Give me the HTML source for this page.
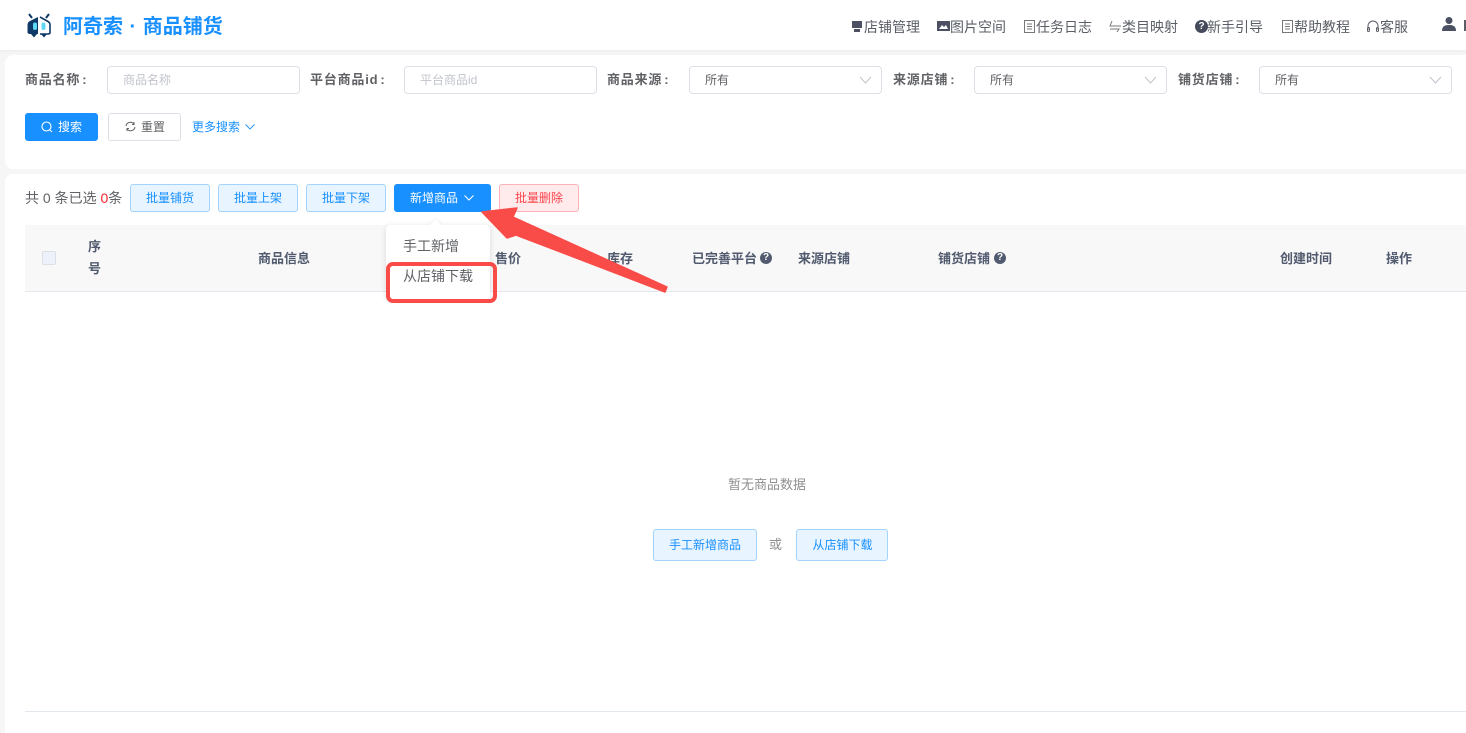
<!DOCTYPE html>
<html><head><meta charset="utf-8">
<style>
*{box-sizing:border-box;margin:0;padding:0}
html,body{width:1466px;height:733px;overflow:hidden;background:#f6f6f6}
body{position:relative;font-family:"Liberation Sans","Noto Sans CJK SC",sans-serif;font-size:12px;color:#606266}
.a{position:absolute;white-space:nowrap}
.card{position:absolute;background:#fff}
.nav{top:18px;font-size:14px;line-height:18px;color:#5a5e66}
.lab{top:71px;font-size:13px;line-height:18px;font-weight:bold;color:#606266;letter-spacing:.8px}
.lab i{font-style:normal;margin-left:2px}
.inp{position:absolute;top:66px;height:28px;border:1px solid #dcdfe6;border-radius:4px;background:#fff;font-size:12px;line-height:26px;padding-left:15px;color:#606266}
.inp.ph{color:#c0c4cc}
.btn{position:absolute;border-radius:3px;font-size:12px;text-align:center;border:1px solid #a3d3ff;background:#e8f4ff;color:#1890ff;height:28px;line-height:26px}
.th{top:250px;font-size:13px;line-height:18px;font-weight:bold;color:#515a6e}
.q{position:absolute;width:12px;height:12px;border-radius:50%;background:#515a6e;color:#fff;font-size:10px;line-height:12px;text-align:center;font-weight:bold}
</style></head><body>
<div class="card" style="left:0;top:0;width:1466px;height:50px;box-shadow:0 1px 4px rgba(0,21,41,.05)"></div>
<div class="card" style="left:5px;top:55px;width:1461px;height:114px;border-radius:8px 0 0 8px"></div>
<div class="card" style="left:5px;top:174px;width:1461px;height:559px;border-radius:8px 0 0 0"></div>

<svg class="a" style="left:26px;top:13px" width="26" height="26" viewBox="0 0 26 26">
<path d="M12 4L4 8Q1.500 9 1.500 12V19Q1.500 21 4 21H12Z" fill="#0f3a68"/>
<path d="M14 4L22 8.500Q24 9.500 24 12V19.500Q24 21 22 21H14" fill="#fff" stroke="#0f3a68" stroke-width="1.600"/>
<rect x="7" y="9.500" width="4" height="7.500" rx="2" fill="#5fd8f5"/>
<rect x="15.500" y="9.500" width="4" height="7.500" rx="2" fill="#5fd8f5"/>
<path d="M3 1L6 5M23 1L20 5" stroke="#0f3a68" stroke-width="2"/>
<path d="M5 21H11L8 24.500ZM15 21H21L18 24.500Z" fill="#0f3a68"/>
</svg>
<div class="a" style="left:63px;top:14px;font-size:20px;line-height:26px;font-weight:bold;color:#1890ff;word-spacing:1px">阿奇索 · 商品铺货</div>

<svg class="a" style="left:851px;top:20px" width="12" height="13" viewBox="0 0 12 13"><path d="M1 1H11V8H1ZM3 9H9V12H3Z" fill="#4b5162"/></svg>
<div class="a nav" style="left:864px">店铺管理</div>
<svg class="a" style="left:937px;top:20px" width="13" height="12" viewBox="0 0 13 12"><path d="M0 1H13V11H0Z" fill="#4b5162"/><path d="M2 9L5 5L7 7L9 5L11 9Z" fill="#fff"/></svg>
<div class="a nav" style="left:950px">图片空间</div>
<svg class="a" style="left:1024px;top:20px" width="11" height="13" viewBox="0 0 11 13" fill="none" stroke="#777"><path d="M.5.500H10.500V12.500H.5ZM3 4H8M3 6.500H8M3 9H8"/></svg>
<div class="a nav" style="left:1036px">任务日志</div>
<svg class="a" style="left:1109px;top:20px" width="13" height="13" viewBox="0 0 13 13" fill="none" stroke="#777"><path d="M3 1L1 6H12M1 9H10L8 12"/></svg>
<div class="a nav" style="left:1122px">类目映射</div>
<div class="q" style="left:1195px;top:20px;width:13px;height:13px;background:#454b5c;line-height:13px">?</div>
<div class="a nav" style="left:1207px">新手引导</div>
<svg class="a" style="left:1282px;top:20px" width="11" height="13" viewBox="0 0 11 13" fill="none" stroke="#777"><path d="M.5.500H10.500V12.500H.5ZM3 4H8M3 6.500H8M3 9H8"/></svg>
<div class="a nav" style="left:1294px">帮助教程</div>
<svg class="a" style="left:1366px;top:20px" width="14" height="13" viewBox="0 0 14 13" fill="none" stroke="#5a5e66" stroke-width="1"><path d="M2 10V6A5 5 0 0 1 12 6V10"/><rect x="1.500" y="7.500" width="2" height="4" rx="1"/><rect x="10.500" y="7.500" width="2" height="4" rx="1"/></svg>
<div class="a nav" style="left:1380px">客服</div>
<svg class="a" style="left:1441px;top:16px" width="16" height="16" viewBox="0 0 16 16"><circle cx="8" cy="4.500" r="3.500" fill="#4b5162"/><path d="M1 15C1 10 4 9 8 9S15 10 15 15Z" fill="#4b5162"/></svg>
<div class="a" style="left:1464px;top:20px;width:2px;height:11px;background:#5a5e66"></div>

<div class="a lab" style="left:25px">商品名称<i>:</i></div>
<div class="inp ph" style="left:107px;width:193px">商品名称</div>
<div class="a lab" style="left:310px">平台商品id<i>:</i></div>
<div class="inp ph" style="left:404px;width:193px">平台商品id</div>
<div class="a lab" style="left:607px">商品来源<i>:</i></div>
<div class="inp" style="left:689px;width:193px">所有<svg class="a" style="right:9px;top:9px" width="13" height="8" viewBox="0 0 13 8" fill="none" stroke="#c0c4cc"><path d="M1 1L6.500 7L12 1"/></svg></div>
<div class="a lab" style="left:893px">来源店铺<i>:</i></div>
<div class="inp" style="left:974px;width:193px">所有<svg class="a" style="right:9px;top:9px" width="13" height="8" viewBox="0 0 13 8" fill="none" stroke="#c0c4cc"><path d="M1 1L6.500 7L12 1"/></svg></div>
<div class="a lab" style="left:1178px">铺货店铺<i>:</i></div>
<div class="inp" style="left:1259px;width:193px">所有<svg class="a" style="right:9px;top:9px" width="13" height="8" viewBox="0 0 13 8" fill="none" stroke="#c0c4cc"><path d="M1 1L6.500 7L12 1"/></svg></div>

<div class="btn" style="left:25px;top:113px;width:73px;background:#1890ff;border-color:#1890ff;color:#fff;padding-left:17px">搜索</div>
<svg class="a" style="left:41px;top:121px" width="12" height="12" viewBox="0 0 12 12" fill="none" stroke="#fff" stroke-width="1.100"><circle cx="5.500" cy="5.500" r="4.500"/><path d="M9 9L11 11"/></svg>
<div class="btn" style="left:108px;top:113px;width:73px;background:#fff;border-color:#dcdfe6;color:#606266;padding-left:17px">重置</div>
<svg class="a" style="left:125px;top:121px" width="11" height="11" viewBox="0 0 11 11" fill="none" stroke="#606266"><path d="M1 5A4.500 4.500 0 0 1 9 3M10 6A4.500 4.500 0 0 1 2 8"/><path d="M9 1V3.500H7M2 10V7.500H4"/></svg>
<div class="a" style="left:192px;top:119px;font-size:12px;line-height:17px;color:#1890ff">更多搜索</div>
<svg class="a" style="left:245px;top:124px" width="10" height="6" viewBox="0 0 10 6" fill="none" stroke="#1890ff" stroke-width=".9"><path d="M.5.500L5 5L9.500.5"/></svg>

<div class="a" style="left:25px;top:189px;font-size:14px;line-height:18px;color:#606266">共 0 条已选 <span style="color:#f5222d">0</span>条</div>
<div class="btn" style="left:130px;top:184px;width:80px">批量铺货</div>
<div class="btn" style="left:218px;top:184px;width:80px">批量上架</div>
<div class="btn" style="left:306px;top:184px;width:80px">批量下架</div>
<div class="btn" style="left:394px;top:184px;width:97px;background:#1890ff;border-color:#1890ff;color:#fff;text-align:left;padding-left:15px">新增商品</div>
<svg class="a" style="left:464px;top:195px" width="10" height="6" viewBox="0 0 10 6" fill="none" stroke="#fff" stroke-width="1.100"><path d="M.5.500L5 5L9.500.5"/></svg>
<div class="btn" style="left:499px;top:184px;width:80px;background:#ffeaec;border-color:#ffb3b8;color:#f9464d">批量删除</div>

<div class="a" style="left:25px;top:225px;width:1441px;height:67px;background:#f8f8f9;border-bottom:1px solid #e3e8ee"></div>
<div class="a" style="left:42px;top:251px;width:14px;height:14px;background:#ecf1fa;border:1px solid #dcdfe6;border-radius:2px"></div>
<div class="a th" style="left:88px;top:238px">序</div>
<div class="a th" style="left:88px;top:260px">号</div>
<div class="a th" style="left:258px">商品信息</div>
<div class="a th" style="left:495px">售价</div>
<div class="a th" style="left:607px">库存</div>
<div class="a th" style="left:692px">已完善平台</div>
<div class="q" style="left:760px;top:252px">?</div>
<div class="a th" style="left:798px">来源店铺</div>
<div class="a th" style="left:938px">铺货店铺</div>
<div class="q" style="left:994px;top:252px">?</div>
<div class="a th" style="left:1280px">创建时间</div>
<div class="a th" style="left:1386px">操作</div>

<div class="a" style="left:386px;top:225px;width:104px;height:74px;background:#fff;border-radius:4px;box-shadow:0 1px 6px rgba(0,0,0,.13)"></div>
<div class="a" style="left:431px;top:221px;width:9px;height:9px;background:#fff;transform:rotate(45deg);box-shadow:-1px -1px 2px rgba(0,0,0,.05)"></div>
<div class="a" style="left:403px;top:237px;font-size:14px;line-height:18px;color:#606266">手工新增</div>
<div class="a" style="left:403px;top:267px;font-size:14px;line-height:18px;color:#606266">从店铺下载</div>
<div class="a" style="left:386px;top:262px;width:111px;height:41px;border:4px solid #f94c48;border-radius:7px"></div>

<svg class="a" style="left:480px;top:205px" width="190" height="92" viewBox="0 0 190 92">
<path d="M2 7L37 3L33 12L187 82L185 87L36 30L27 33Z" fill="#f94c48" stroke="#f94c48" stroke-width="1.500" stroke-linejoin="round"/>
</svg>

<div class="a" style="left:728px;top:476px;font-size:13px;line-height:18px;color:#8f8f8f">暂无商品数据</div>
<div class="btn" style="left:653px;top:529px;width:104px;height:32px;line-height:30px">手工新增商品</div>
<div class="a" style="left:769px;top:536px;font-size:13px;line-height:18px;color:#8f8f8f">或</div>
<div class="btn" style="left:796px;top:529px;width:92px;height:32px;line-height:30px;padding-left:1px">从店铺下载</div>
<div class="a" style="left:25px;top:711px;width:1441px;height:1px;background:#e3e8ee"></div>
</body></html>
